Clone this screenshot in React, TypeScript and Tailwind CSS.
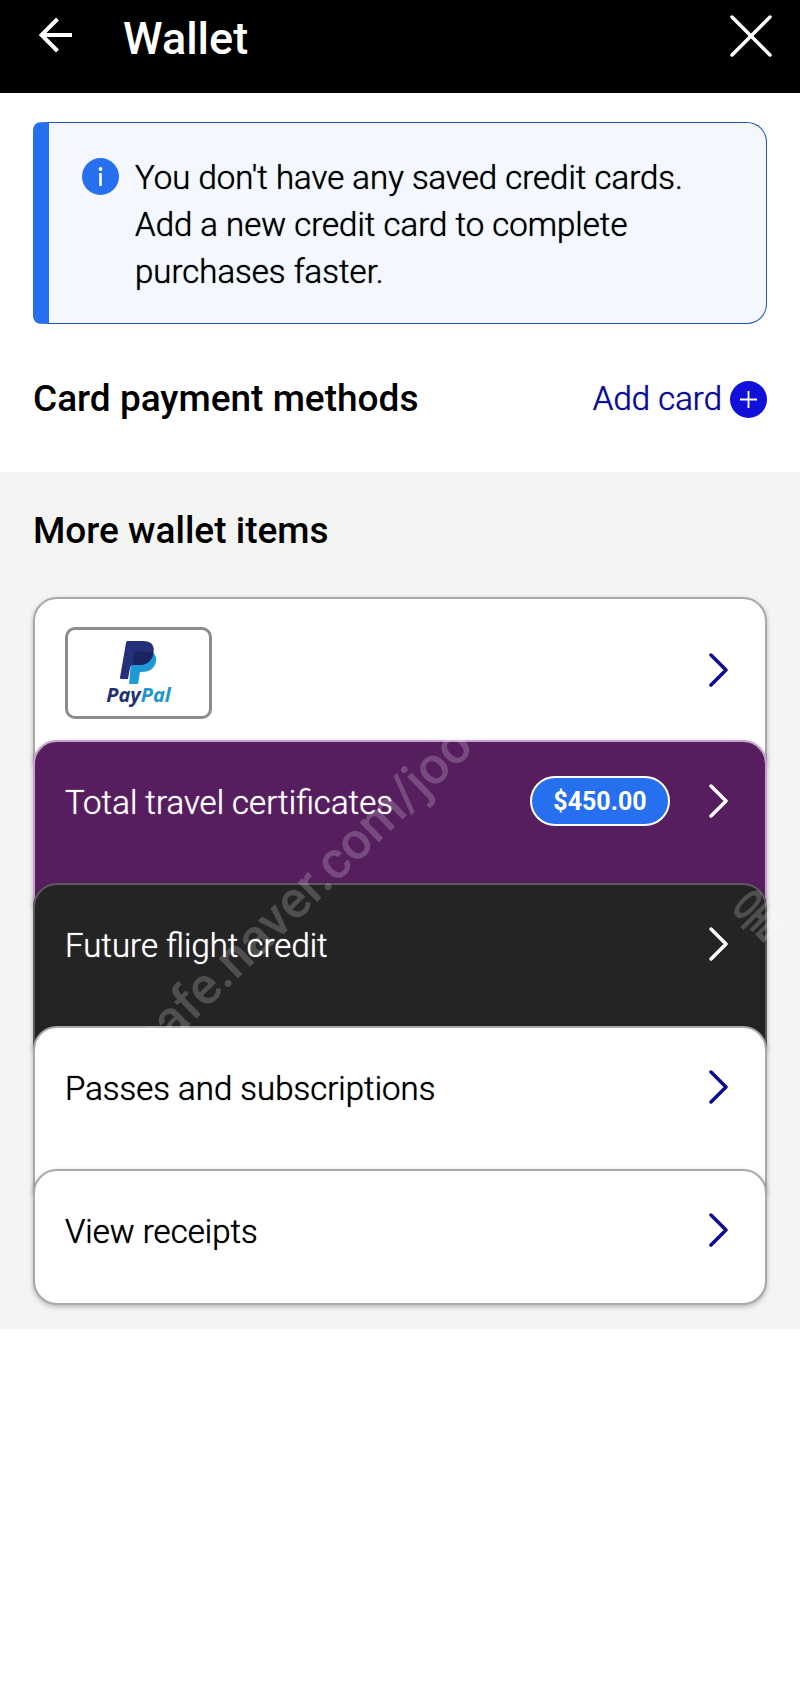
import React from "react";
import clsx from "clsx";

interface IWalletItem {
  label: string;
  tone: "light" | "purple" | "dark";
  amount?: string;
  paypal?: boolean;
}

const walletItems: IWalletItem[] = [
  { label: "PayPal", tone: "light", paypal: true },
  { label: "Total travel certificates", tone: "purple", amount: "$450.00" },
  { label: "Future flight credit", tone: "dark" },
  { label: "Passes and subscriptions", tone: "light" },
  { label: "View receipts", tone: "light" },
];

const tones = {
  light: "border-[#a9a9a9] bg-white text-black",
  purple: "border-[#c79fd0] bg-[#561e5f] text-white",
  dark: "border-[#5c5a5c] bg-[#242424] text-white",
};

const BackIcon = () => (
  <svg width="34" height="36" viewBox="0 0 34 36" fill="none">
    <path d="M33 18H3M18.500 2L2.500 18L18.500 34" stroke="white" strokeWidth="4" />
  </svg>
);

const CloseIcon = () => (
  <svg width="42" height="42" viewBox="0 0 42 42" fill="none">
    <path d="M2 2L40 40M40 2L2 40" stroke="white" strokeWidth="3.500" strokeLinecap="round" />
  </svg>
);

const InfoIcon = () => (
  <svg className="shrink-0" width="37" height="37" viewBox="0 0 37 37">
    <circle cx="18.500" cy="18.500" r="18.500" fill="#2670f0" />
    <circle cx="18.500" cy="11" r="1.900" fill="white" />
    <path d="M18.500 15V28" stroke="white" strokeWidth="2.600" />
  </svg>
);

const PlusIcon = () => (
  <svg width="37" height="37" viewBox="0 0 37 37">
    <circle cx="18.500" cy="18.500" r="18.500" fill="#1010d8" />
    <path d="M18.500 10V27M10 18.500H27" stroke="white" strokeWidth="1.800" />
  </svg>
);

const ChevronIcon = ({ className }: { className: string }) => (
  <svg className={className} width="20" height="34" viewBox="0 0 20 34" fill="none">
    <path
      d="M2 2L17 17L2 32"
      stroke="currentColor"
      strokeWidth="3.500"
      strokeLinecap="round"
      strokeLinejoin="round"
    />
  </svg>
);

const PayPalLogo = () => (
  <span className="flex h-[92px] w-[147px] flex-col items-center rounded-[10px] border-3 border-[#8c8c8c] bg-white pt-[11px]">
    <svg width="38" height="44" viewBox="0 0 38 44">
      <path
        d="M12 10H29C34 11 37 15 36 20C35 27 30 31 22 31H20L18 43H9Z"
        fill="#1f9ad6"
      />
      <path
        d="M8 0H23C31 0 35 4 33.500 12C32 20 27 24 19 24H12.500C11 24 10.500 25 10 27L8 38H1.500C0 38 0 37 0 36.500L6 2C6.300 .500 7 0 8 0Z"
        fill="#24307a"
      />
      <path
        d="M16 10.500H28C30.500 10.500 32 11 33.500 12C32 20 27 24 19 24H12.500L14 12.500C14.200 11 15 10.500 16 10.500Z"
        fill="#1d2463"
      />
    </svg>
    <span className="font-['Open_Sans',sans-serif] text-[20px] leading-5 font-bold italic">
      <span className="text-[#22306f]">Pay</span>
      <span className="text-[#1f94cf]">Pal</span>
    </span>
  </span>
);

const WalletRow = ({ item, last }: { item: IWalletItem; last: boolean }) => (
  <a
    href="#"
    aria-label={item.label}
    className={clsx(
      "flex items-start justify-between rounded-t-3xl border-2 pr-9 pl-[30px] shadow-[0_2px_5px_rgba(0,0,0,0.25)]",
      tones[item.tone],
      item.paypal ? "pt-7" : "pt-[34px]",
      last ? "h-[136px] rounded-b-3xl" : "-mb-6 h-[167px]"
    )}
  >
    {item.paypal ? (
      <PayPalLogo />
    ) : (
      <span className="text-[33px] leading-[54px] font-light [text-shadow:0_0_1px_currentColor]">
        {item.label}
      </span>
    )}
    <span className={clsx("flex items-center gap-[39px]", item.paypal ? "h-[86px]" : "h-[50px]")}>
      {item.amount && (
        <span className="flex h-[50px] w-[140px] items-center justify-center rounded-full border-2 border-white bg-[#2670f0] pt-[2px] text-[25px] font-bold">
          {item.amount}
        </span>
      )}
      <ChevronIcon className={item.tone === "light" ? "text-[#0a0a96]" : "text-white"} />
    </span>
  </a>
);

export default function App() {
  return (
    <div className="min-h-screen bg-white font-[Roboto,sans-serif] text-black">
      <header className="flex h-[93px] items-start justify-between bg-black pt-[10px] pr-7 pl-[39px] text-white">
        <div className="flex items-start gap-[50px]">
          <button type="button" aria-label="Back" className="pt-[7px]">
            <BackIcon />
          </button>
          <h1 className="text-[45px] leading-[58px] font-medium">Wallet</h1>
        </div>
        <button type="button" aria-label="Close" className="py-[5px]">
          <CloseIcon />
        </button>
      </header>

      <main>
        <div className="px-[33px] pt-[29px]">
          <div
            role="status"
            className="flex gap-4 rounded-l-lg rounded-r-[20px] border border-l-[16px] border-[#1f56a8] border-l-[#2670f0] bg-[#f4f7fe] pt-[31px] pr-8 pb-7 pl-[33px]"
          >
            <span className="pt-1">
              <InfoIcon />
            </span>
            <p className="text-[33px] leading-[47px] font-light [text-shadow:0_0_1px_currentColor]">
              You don't have any saved credit cards. Add a new credit card to
              complete purchases faster.
            </p>
          </div>
        </div>

        <section className="flex h-[148px] items-center justify-between px-[33px] pt-[2px]">
          <h2 className="text-[37px] font-medium">Card payment methods</h2>
          <button
            type="button"
            className="flex items-center gap-2 text-[33px] font-light text-[#0a0a96] [text-shadow:0_0_1px_currentColor]"
          >
            Add card
            <PlusIcon />
          </button>
        </section>

        <section className="bg-[#f4f4f3] px-[33px] pt-8 pb-6">
          <h2 className="text-[37px] leading-[54px] font-medium">More wallet items</h2>
          <nav className="relative mt-[39px]">
            {walletItems.map((item, index) => (
              <div key={item.label} className="relative">
                <WalletRow item={item} last={index === walletItems.length - 1} />
              </div>
            ))}
            {/* watermark, only shows on the dark cards */}
            <div
              aria-hidden="true"
              className="pointer-events-none absolute inset-0 text-[52px] leading-none font-medium text-white/20"
            >
              <span className="absolute top-[418px] left-[126px] origin-bottom-left -rotate-44 whitespace-nowrap">
                cafe.naver.com/joo
              </span>
              <span className="absolute top-[290px] left-[700px] -rotate-45 font-['Noto_Sans_CJK_KR',sans-serif]">
                울
              </span>
            </div>
          </nav>
        </section>
      </main>
    </div>
  );
}
